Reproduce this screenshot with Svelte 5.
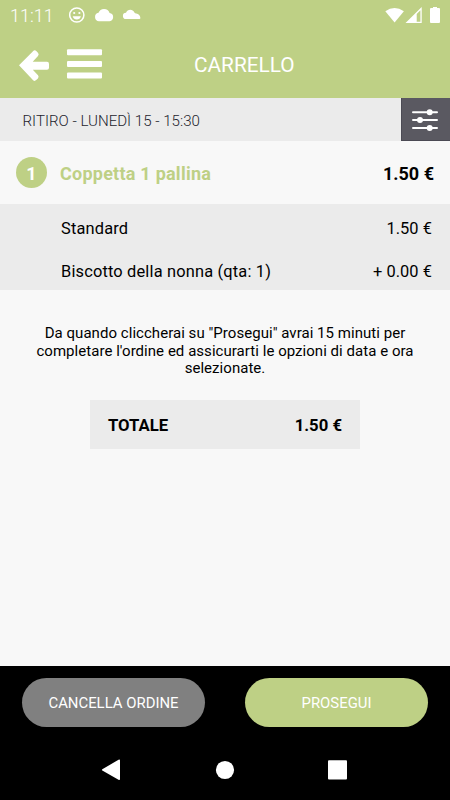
<script>
  const options = [
    { name: 'Standard', price: '1.50 €' },
    { name: 'Biscotto della nonna (qta: 1)', price: '+ 0.00 €' }
  ];
</script>

<div class="screen">
  <header>
    <div class="status">
      <span class="clock">11:11</span>
      <svg class="notifications" width="72" height="18" viewBox="0 0 72 18" fill="#fff">
        <circle cx="7.8" cy="9" r="7.1" fill="none" stroke="#fff" stroke-width="1.5" />
        <circle cx="5.2" cy="7" r="1.1" />
        <circle cx="10.4" cy="7" r="1.1" />
        <path d="M3.7 10.3H11.9C11.3 12.5 9.8 13.6 7.8 13.6S4.3 12.5 3.7 10.3Z" />
        <path d="M30 15.2A4.3 4.3 0 0 1 29.5 6.7A5.9 5.9 0 0 1 40.6 6.9A4.2 4.2 0 0 1 40.6 15.2Z" />
        <path d="M57 13A3.1 3.1 0 0 1 57 6.8C58.2 3.2 63.6 2.5 65.4 6.4Q66 7.4 67.2 7.4Q71 7.9 71.4 12Q71.4 13 70.4 13Z" />
      </svg>
      <svg class="signals" width="56" height="18" viewBox="0 0 56 18" fill="#fff">
        <path d="M0.3 5.3Q9.5 -1.5 18.9 5.3L9.6 16.6Z" />
        <path fill-rule="evenodd" d="M20.5 17L36.7 1V17ZM31.7 8V15.7H35.4V4.3Z" />
        <path d="M46 2H48V1H52V2H54Q55 2 55 3V16Q55 17 54 17H46Q45 17 45 16V3Q45 2 46 2Z" />
      </svg>
    </div>
    <div class="appbar">
      <svg width="84" height="34" viewBox="0 0 84 34" fill="#fff">
        <path d="M0 16.3L14 2.2Q15.6 0.6 17.3 2.1L19.1 4Q20.3 5.5 19 7L13.7 12.8H28Q30 12.8 30 15V18.7Q30 20.8 28 20.8H13.8L19 26.3Q20.3 27.8 18.9 29.4L17.2 31.1Q15.6 32.7 13.9 31Z" />
        <rect x="48" y="0.2" width="35" height="6" rx="1" />
        <rect x="48" y="12" width="35" height="6" rx="1" />
        <rect x="48" y="23.4" width="35" height="6" rx="1" />
      </svg>
      <h1>CARRELLO</h1>
    </div>
  </header>

  <div class="pickup">
    <span>RITIRO - LUNEDÌ 15 - 15:30</span>
    <button class="filter" aria-label="Opzioni">
      <svg width="27" height="22" viewBox="0 0 27 22" fill="#fff" stroke="#fff" stroke-width="2" stroke-linecap="round">
        <path d="M1 3.3H25M1 11.1H25M1 19H25" />
        <g stroke="none">
          <circle cx="17.7" cy="3.3" r="3" />
          <circle cx="8" cy="11.1" r="3" />
          <circle cx="17.7" cy="19" r="3" />
        </g>
      </svg>
    </button>
  </div>

  <main>
    <div class="item">
      <span class="qty">1</span>
      <span class="name">Coppetta 1 pallina</span>
      <b class="price">1.50 €</b>
    </div>
    <div class="options">
      {#each options as option}
        <div class="option"><span>{option.name}</span><span class="amount">{option.price}</span></div>
      {/each}
    </div>
    <p>Da quando cliccherai su "Prosegui" avrai 15 minuti per<br />completare l'ordine ed assicurarti le opzioni di data e ora<br />selezionate.</p>
    <div class="total"><b>TOTALE</b><b>1.50 €</b></div>
  </main>

  <footer>
    <div class="actions">
      <button class="cancel">CANCELLA ORDINE</button>
      <button class="go">PROSEGUI</button>
    </div>
    <svg class="nav" width="450" height="60" viewBox="0 0 450 60" fill="#fff">
      <path d="M102.3 29.2L118.5 19.8Q120 19 120 20.5V39Q120 40.7 118.5 39.8L102.3 30.6Q101.5 30 102.3 29.2Z" />
      <circle cx="225" cy="30" r="9.1" />
      <rect x="328" y="20.3" width="19" height="19.3" rx="1" />
    </svg>
  </footer>
</div>

<style>
  :global(body) { margin: 0; }
  .screen {
    width: 450px;
    height: 800px;
    display: flex;
    flex-direction: column;
    overflow: hidden;
    background: #f8f8f8;
    color: #000;
    font-family: Roboto, "Liberation Sans", sans-serif;
    font-size: 16px;
  }
  header { height: 98px; flex: none; background: #bed085; color: #fff; }
  .status { display: flex; height: 30px; align-items: center; padding: 0 9px 0 10px; }
  .clock { width: 59px; padding-top: 1px; font-size: 18px; font-weight: 300; white-space: nowrap; }
  .signals { margin-left: auto; }
  .appbar { display: flex; padding: 19px 0 0 19px; height: 34px; }
  h1 { margin: 0 0 0 91px; font-size: 20.8px; line-height: 32px; font-weight: 400; }
  button { border: 0; padding: 0; font-family: inherit; color: #fff; }
  .pickup { height: 43px; flex: none; display: flex; justify-content: space-between; align-items: center; background: #ebebeb; padding-left: 22.5px; font-size: 15.1px; font-weight: 300; color: #24242e; }
  .pickup span { padding-top: 2px; }
  .filter { width: 49px; height: 43px; background: #5a5961; display: grid; place-items: center; border-bottom: 1px solid #4b4a54; border-left: 1px solid #4b4a54; box-sizing: border-box; }
  .filter svg { margin: 1px 1px 0 0; }
  main { flex: 1; }
  .item { height: 63px; display: flex; align-items: center; padding: 0 16px; box-sizing: border-box; font-size: 18px; }
  .qty { width: 31px; height: 31px; border-radius: 50%; background: #bed085; color: #fff; text-align: center; line-height: 33px; font-weight: 700; }
  .name { margin-left: 13px; color: #bed085; font-weight: 700; letter-spacing: 0.24px; padding-top: 2px; }
  .price { margin-left: auto; padding-top: 2px; }
  .options { height: 86px; background: #ebebeb; padding: 3px 18px 0 61px; box-sizing: border-box; }
  .option { height: 43px; display: flex; justify-content: space-between; align-items: center; font-size: 16.4px; letter-spacing: 0.17px; }
  .amount { letter-spacing: 0.06px; }
  p { margin: 35px 0 22.5px; text-align: center; font-size: 15px; line-height: 17.5px; letter-spacing: 0.04px; white-space: nowrap; }
  .total { width: 270px; height: 49px; margin: auto; box-sizing: border-box; padding: 1px 18px 0; background: #ebebeb; display: flex; align-items: center; justify-content: space-between; font-size: 16.7px; }
  footer { height: 134.5px; flex: none; background: #000; }
  .actions { display: flex; justify-content: space-between; padding: 12.9px 22px 0; height: 61.6px; }
  .actions button { width: 183px; height: 48.5px; padding-top: 1.5px; border-radius: 25px; font-size: 14.9px; background: #bed085; }
  .actions .cancel { background: #808080; }
  .nav { display: block; }
</style>
